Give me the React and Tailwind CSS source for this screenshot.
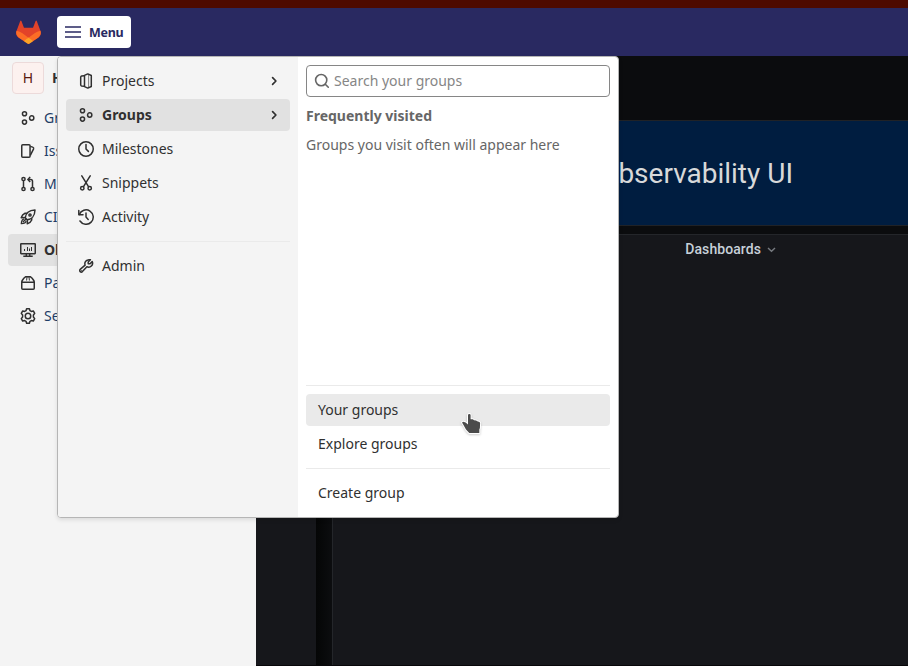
import React from 'react';

function Icon({ children, className = '' }) {
  return (
    <svg
      viewBox="0 0 16 16"
      width="16"
      height="16"
      fill="none"
      stroke="currentColor"
      strokeWidth="1.5"
      className={`shrink-0 ${className}`}
    >
      {children}
    </svg>
  );
}

const icons = {
  project: (
    <>
      <path d="M6.500 2.400 9.800.9l3.500 1.600v11l-3.500 1.600-3.300-1.500Z" strokeLinejoin="round" strokeWidth="1.500" />
      <path d="M10.600 1.500v13" strokeWidth=".6" />
      <path d="M6.200 2.700 3.600 3q-.9.200-.9 1.200v7.600q0 1 .9 1.200l2.600.3" />
    </>
  ),
  group: (
    <>
      <circle cx="4.500" cy="3.700" r="2.050" />
      <circle cx="4.500" cy="12.100" r="2.050" />
      <circle cx="11.700" cy="8" r="2.150" />
    </>
  ),
  milestone: (
    <>
      <circle cx="8" cy="8" r="7.250" />
      <path d="M8 3.500V8l2.400 2.400" strokeLinecap="round" />
    </>
  ),
  snippet: (
    <>
      <path d="M3.800.8 10.500 11.700M12.200.8 5.500 11.700" strokeLinecap="round" />
      <circle cx="4.300" cy="13.200" r="1.700" />
      <circle cx="11.700" cy="13.200" r="1.700" />
    </>
  ),
  history: (
    <>
      <path d="M1.300 5.500A7.200 7.200 0 1 1 2 12" strokeLinecap="round" />
      <path d="M.8 1.500v4.250H5" strokeLinecap="round" strokeLinejoin="round" />
      <path d="M8 4v4l2.200 2.400" strokeLinecap="round" />
    </>
  ),
  wrench: (
    <>
      <path
        d="M9.900 1.900a3.800 3.800 0 0 1 2.500-.1L10.200 4v1.800H12l2.200-2.200a3.900 3.900 0 0 1-5.300 5.100l-4.500 4.900a1.550 1.550 0 0 1-2.200-2.200L7.100 7.100a3.900 3.900 0 0 1 2.800-5.200Z"
        strokeLinejoin="round"
      />
      <path d="M3.300 12.600h.1" strokeLinecap="round" strokeWidth="1" />
    </>
  ),
  issues: (
    <>
      <rect x="1.750" y="1.750" width="8.300" height="12.500" rx="1" />
      <path d="m10.300 3.400 2.400.7c.8.3 1.100.9.900 1.700L10.300 12.300" strokeLinejoin="round" />
    </>
  ),
  merge: (
    <>
      <circle cx="3.500" cy="3" r="1.600" />
      <circle cx="3.500" cy="13" r="1.600" />
      <circle cx="12.500" cy="13" r="1.600" />
      <path d="M3.500 4.700v6.600M12.500 11.300V5.300c0-1.100-.7-1.800-1.800-1.800H8.500" />
      <path d="M10.200 1 7.900 3.500l2.300 2.500" />
    </>
  ),
  rocket: (
    <>
      <path
        d="M5.300 8.900C5.500 4.600 8.900 1.200 15 1 14.800 7.100 11.400 10.500 7.100 10.700Z"
        strokeLinejoin="round"
      />
      <path
        d="M7 4.300H5C3.100 5.100 1.800 6.600 1.200 8.700l4-.1M11.700 9v2c-.8 1.900-2.300 3.200-4.400 3.800l.1-4"
        strokeLinejoin="round"
      />
      <circle cx="10" cy="6" r="1.100" />
      <path d="M4.200 9.900c-2 .3-2.700 1.900-2.900 4.800 2.900-.2 4.500-.9 4.800-2.900M3 13l3.300-3.300" strokeLinejoin="round" strokeWidth="1.300" />
    </>
  ),
  monitor: (
    <>
      <rect x=".75" y="1.750" width="14.500" height="10" rx=".4" />
      <path d="M4.500 7v2M7.500 5v4M9.500 6.500V9M11.500 5v4" strokeWidth="1" />
      <path d="M6.300 11.700V14M9.700 11.700V14M3.300 14.300h9.400" strokeWidth="1.400" />
    </>
  ),
  package: (
    <>
      <path
        d="M1.750 7.200v6c0 .6.400 1 1 1h10.500c.6 0 1-.4 1-1v-6M1.750 7.200h12.500c0-.6-.2-1.200-.5-1.700-.9-1.500-1.900-2.700-3.500-3.800H5.750C4.150 2.800 3.150 4 2.250 5.500c-.3.500-.5 1.100-.5 1.700Z"
        strokeLinejoin="round"
      />
      <path d="M7 2 6.600 5.500M9 2l.4 3.500" strokeWidth="1" />
    </>
  ),
  settings: (
    <>
      <path
        d="M6.600.8h2.800l.6 1.900 1.300.7 2-.5 1.400 2.500-1.300 1.600v2l1.300 1.600-1.400 2.500-2-.5-1.300.7-.6 1.900H6.600L6 13.300l-1.300-.7-2 .5-1.400-2.500L2.600 9V7L1.300 5.400l1.400-2.500 2 .5L6 2.700Z"
        strokeLinejoin="round"
      />
      <circle cx="8" cy="8" r="2.750" />
    </>
  ),
};

const sideItems = [
  ['group', 'Group information'],
  ['issues', 'Issues'],
  ['merge', 'Merge requests'],
  ['rocket', 'CI/CD'],
  ['monitor', 'Observability'],
  ['package', 'Packages & Registries'],
  ['settings', 'Settings'],
];

const menuItems = [
  ['project', 'Projects', true],
  ['group', 'Groups', true],
  ['milestone', 'Milestones', false],
  ['snippet', 'Snippets', false],
  ['history', 'Activity', false],
];

function TanukiLogo() {
  return (
    <svg viewBox="0 0 26 25" width="25" height="24" className="shrink-0">
      <path d="M.6 11.200 4.400 1q.6-1.200 1.200 0L8.300 8h9.400L20.400 1q.6-1.200 1.200 0l3.800 10.200c.9 2.700.3 5.300-2.200 7.300L13 25 2.800 18.500C.3 16.500-.3 13.900.6 11.200Z" fill="#e24329" />
      <path d="M25.400 11.200c-2.300.4-4.200 1.300-6.100 2.600L13 18.500l4.800 3.500 5.400-3.800c2.500-1.900 3.100-4.500 2.200-7ZM.6 11.200c2.300.4 4.200 1.300 6.100 2.600L13 18.500 8.200 22l-5.400-3.800C.3 16.300-.3 13.700.6 11.200Z" fill="#fc6d26" />
      <path d="m8 21.900 5-3.600 5 3.600-3.700 2.600q-1.300.9-2.600 0Z" fill="#fca326" />
    </svg>
  );
}

function TopBar() {
  return (
    <header className="shrink-0">
      <div className="h-2 bg-[#4d0a00]" />
      <div className="flex h-12 items-center bg-[#292961] pl-4">
        <TanukiLogo />
        <button className="ml-4 flex h-8 w-[74px] items-center gap-2 rounded bg-white pl-2 text-[#292961]">
          <svg width="16" height="16" viewBox="0 0 16 16" className="shrink-0">
            <path d="M0 3h16M0 8h16M0 13h16" stroke="currentColor" strokeWidth="1.400" />
          </svg>
          <span className="pt-0.5 text-[12.500px] font-bold tracking-[-0.300px]">Menu</span>
        </button>
      </div>
    </header>
  );
}

function Sidebar() {
  return (
    <aside className="w-64 shrink-0 overflow-hidden bg-[#f4f4f4] pt-1.5 text-sm">
      <div className="flex items-center gap-2 pl-3 font-bold text-[#303030]">
        <div className="flex size-8 items-center justify-center rounded border border-[#ecdada] bg-[#fcf1ef] pb-px text-sm font-normal text-[#5a1a10]">
          H
        </div>
        <span>Helpers</span>
      </div>
      <nav className="mt-2 flex flex-col gap-px px-2">
        {sideItems.map(([icon, label]) => (
          <a
            key={label}
            className={`flex h-8 items-center gap-2 rounded pl-3 ${
              icon === 'monitor' ? 'bg-[#e1e1e1] font-bold text-[#303030]' : 'text-[#1f3d66]'
            }`}
          >
            <Icon className="text-[#303030]">{icons[icon]}</Icon>
            {label}
          </a>
        ))}
      </nav>
    </aside>
  );
}

function ObservabilityFrame() {
  return (
    <main className="flex min-w-0 grow border-b border-[#08070a] bg-[#0b0c0e]">
      <div className="w-[60px] shrink-0 bg-[#16171b]" />
      <div className="w-4 shrink-0 bg-gradient-to-r from-[#050606] to-[#0c0d0f]" />
      <div className="flex min-w-0 grow flex-col pt-16">
        <div className="flex h-[106px] items-center justify-end border border-r-0 border-[#202226] bg-[#001d40] pt-0.5 pr-[115px] font-[Roboto,sans-serif] text-[28px] text-[#d8d9da]">
          <span className="whitespace-nowrap">Welcome to GitLab Observability UI</span>
        </div>
        <div className="mt-2 grow border-t border-l border-[#24262a] bg-[#16171b]">
          <div className="flex h-7 items-center justify-end gap-1.5 pr-[132px] font-[Roboto,sans-serif] text-sm font-medium tracking-[0.080px] text-[#c7d0d9]">
            Dashboards
            <svg width="9" height="6" viewBox="0 0 9 6" fill="none" stroke="#777b80" strokeWidth="1.400" className="mt-0.5">
              <path d="m1 1 3.500 3.300L8 1" />
            </svg>
          </div>
        </div>
      </div>
    </main>
  );
}

function Chevron() {
  return (
    <svg width="16" height="16" viewBox="0 0 16 16" fill="none" stroke="#303030" strokeWidth="1.700" className="mr-2 ml-auto">
      <path d="M6.600 4.700 9.900 8l-3.300 3.300" strokeLinecap="round" strokeLinejoin="round" />
    </svg>
  );
}

function MenuDropdown() {
  return (
    <div className="absolute top-14 left-[57px] flex h-[462px] w-[562px] overflow-hidden rounded border border-[#b5b5b5] bg-white text-sm text-[#303030] shadow-[0_2px_4px_rgba(0,0,0,0.1)]">
      <div className="w-60 shrink-0 bg-[#f4f4f4] p-2">
        <div className="flex flex-col gap-0.5">
          {menuItems.map(([icon, label, arrow]) => (
            <div
              key={label}
              className={`flex h-8 items-center gap-2 rounded pl-3 ${
                icon === 'group' ? 'bg-[#e1e1e1] font-bold' : ''
              }`}
            >
              <Icon>{icons[icon]}</Icon>
              {label}
              {arrow && <Chevron />}
            </div>
          ))}
        </div>
        <div className="mt-2 border-t border-[#eaeaea] pt-2">
          <div className="flex h-8 items-center gap-2 pl-3">
            <Icon>{icons.wrench}</Icon>
            Admin
          </div>
        </div>
      </div>
      <div className="flex grow flex-col p-2">
        <div className="flex h-8 shrink-0 items-center gap-1 rounded border border-[#868686] pl-[7px] text-[#868686]">
          <svg width="16" height="16" viewBox="0 0 16 16" fill="none" stroke="#666" strokeWidth="1.600" className="shrink-0">
            <circle cx="7.200" cy="7.100" r="5.600" />
            <path d="m11.300 11.200 3 3" strokeLinecap="round" />
          </svg>
          Search your groups
        </div>
        <div className="mt-[9px] leading-5 font-bold text-[#666]">Frequently visited</div>
        <div className="mt-[9px] leading-5 text-[#666]">Groups you visit often will appear here</div>
        <div className="mt-auto flex flex-col gap-0.5 border-t border-[#eaeaea] pt-2">
          <div className="flex h-8 items-center rounded bg-[#eaeaea] pl-3">Your groups</div>
          <div className="flex h-8 items-center pl-3">Explore groups</div>
        </div>
        <div className="mt-2 border-t border-[#eaeaea] pt-2">
          <div className="flex h-8 items-center pl-3">Create group</div>
        </div>
      </div>
    </div>
  );
}

function HandCursor() {
  return (
    <svg
      width="22"
      height="24"
      viewBox="0 0 22 24"
      className="absolute top-[412px] left-[460px] drop-shadow-[0_1px_1px_rgba(0,0,0,0.2)]"
    >
      <path
        d="M8 3.200q0-1.200 1.300-1.200T10.600 3.200V7.200h2.200l1.300 1 2 .2 1.100.9 2.300.6.600 1-.2 5.100-.6 1.500V21H9.300L6 17.500 3.200 12.400 2 10.500l1.300-.7 2.300.6L8 12.600Z"
        fill="#4b4b4b"
        stroke="#fff"
        strokeWidth="2"
        strokeLinejoin="round"
        paintOrder="stroke"
      />
    </svg>
  );
}

export default function App() {
  return (
    <div className="relative flex h-[666px] w-[908px] flex-col overflow-hidden font-['Noto_Sans',sans-serif]">
      <TopBar />
      <div className="flex min-h-0 grow">
        <Sidebar />
        <ObservabilityFrame />
      </div>
      <MenuDropdown />
      <HandCursor />
    </div>
  );
}
